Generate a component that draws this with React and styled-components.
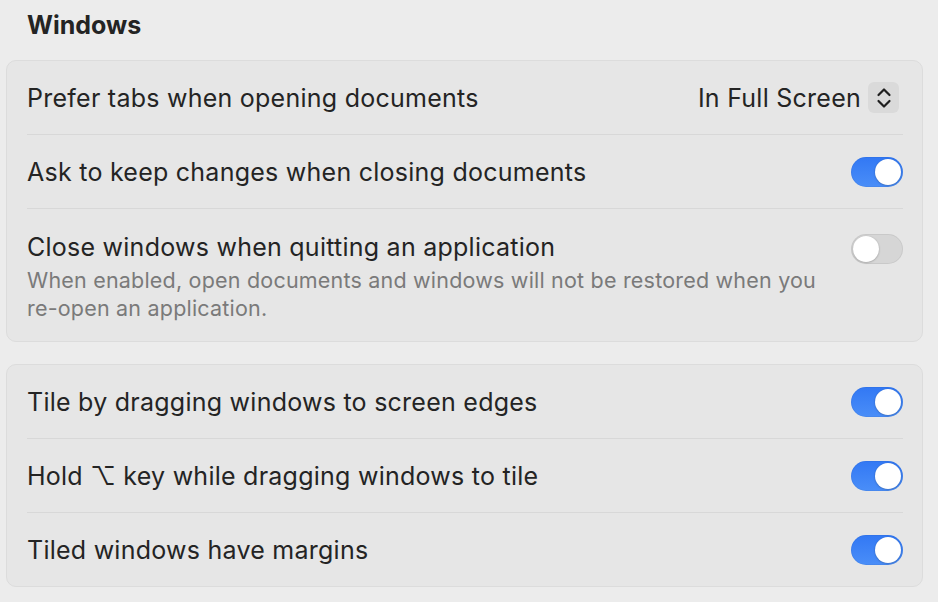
import styled, { createGlobalStyle } from "styled-components";

const GlobalStyle = createGlobalStyle`
  html, body {
    margin: 0;
    padding: 0;
    background: #ececec;
  }
  body {
    font-family: "Inter", "DejaVu Sans", sans-serif;
    color: #262626;
    -webkit-font-smoothing: antialiased;
  }
`;

const Page = styled.div`
  width: 938px;
  height: 602px;
  box-sizing: border-box;
  padding: 10px 15px 0 6px;
  display: flex;
  flex-direction: column;
  gap: 22px;
  overflow: hidden;
`;

const Heading = styled.h2`
  margin: 0 0 -2px 21px;
  font-size: 25px;
  font-weight: 700;
  line-height: 30px;
  color: #242424;
`;

const Panel = styled.section`
  background: #e6e6e6;
  border: 1px solid #dcdcdc;
  border-radius: 10px;
  display: flex;
  flex-direction: column;
`;

const Row = styled.div`
  display: flex;
  align-items: ${(p) => (p.$top ? "flex-start" : "center")};
  justify-content: space-between;
  gap: 16px;
  min-height: ${(p) => (p.$top ? "auto" : "73px")};
  padding: ${(p) => (p.$top ? "24px 19px 19px 20px" : "0 19px 0 20px")};
  box-sizing: border-box;
`;

const Divider = styled.div`
  height: 1px;
  margin: 0 19px 0 20px;
  background: #d8d8d8;
`;

const Texts = styled.div`
  display: flex;
  flex-direction: column;
  gap: 5px;
  min-width: 0;
`;

const Label = styled.div`
  font-size: 25px;
  line-height: 28px;
  letter-spacing: 0.25px;
  color: #242424;
`;

const Note = styled.div`
  font-size: 21.5px;
  line-height: 28px;
  letter-spacing: 0.2px;
  color: #7a7a7a;
`;

const Track = styled.div`
  flex: none;
  position: relative;
  width: 52px;
  height: 30px;
  margin-top: ${(p) => (p.$top ? "1px" : "0")};
  border-radius: 15px;
  background: ${(p) =>
    p.$on ? "linear-gradient(180deg, #3278f4 0%, #4a8ef8 100%)" : "#d6d6d6"};
  box-shadow: inset 0 0 0 1px ${(p) => (p.$on ? "rgba(0,0,0,0.04)" : "rgba(0,0,0,0.06)")};
`;

const Knob = styled.div`
  position: absolute;
  top: 2px;
  left: ${(p) => (p.$on ? "24px" : "2px")};
  width: 26px;
  height: 26px;
  border-radius: 50%;
  background: #fff;
  box-shadow: 0 0.5px 2px rgba(0, 0, 0, 0.3);
`;

const Picker = styled.div`
  display: flex;
  align-items: center;
  gap: 7px;
  margin-right: 4px;
`;

const PickerValue = styled.span`
  font-size: 25px;
  line-height: 28px;
  letter-spacing: 0.25px;
  color: #242424;
`;

const StepButton = styled.div`
  width: 31px;
  height: 31px;
  border-radius: 6px;
  background: #dadada;
  display: flex;
  align-items: center;
  justify-content: center;
`;

function Toggle({ on, top }) {
  return (
    <Track $on={on} $top={top}>
      <Knob $on={on} />
    </Track>
  );
}

function Chevrons() {
  return (
    <svg width="18" height="26" viewBox="0 0 18 26" fill="none">
      <path d="M3.5 10 L9 4.5 L14.5 10" stroke="#1f1f1f" strokeWidth="2.2" strokeLinecap="round" strokeLinejoin="round" />
      <path d="M3.5 16 L9 21.5 L14.5 16" stroke="#1f1f1f" strokeWidth="2.2" strokeLinecap="round" strokeLinejoin="round" />
    </svg>
  );
}

function App() {
  return (
    <>
      <GlobalStyle />
      <Page>
        <Heading>Windows</Heading>
        <Panel>
          <Row>
            <Label>Prefer tabs when opening documents</Label>
            <Picker>
              <PickerValue>In Full Screen</PickerValue>
              <StepButton>
                <Chevrons />
              </StepButton>
            </Picker>
          </Row>
          <Divider />
          <Row>
            <Label>Ask to keep changes when closing documents</Label>
            <Toggle on />
          </Row>
          <Divider />
          <Row $top>
            <Texts>
              <Label>Close windows when quitting an application</Label>
              <Note>
                When enabled, open documents and windows will not be restored when you
                re-open an application.
              </Note>
            </Texts>
            <Toggle top />
          </Row>
        </Panel>
        <Panel>
          <Row>
            <Label>Tile by dragging windows to screen edges</Label>
            <Toggle on />
          </Row>
          <Divider />
          <Row>
            <Label>Hold ⌥ key while dragging windows to tile</Label>
            <Toggle on />
          </Row>
          <Divider />
          <Row>
            <Label>Tiled windows have margins</Label>
            <Toggle on />
          </Row>
        </Panel>
      </Page>
    </>
  );
}

export default App;
